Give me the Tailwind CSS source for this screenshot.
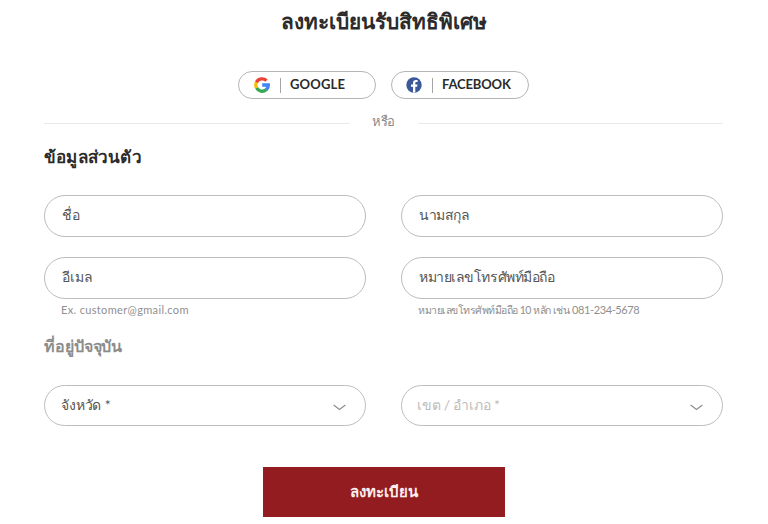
<!DOCTYPE html>
<html lang="th">
<head>
  <meta charset="UTF-8">
  <meta name="viewport" content="width=device-width, initial-scale=1.0">
  <title>ลงทะเบียนรับสิทธิพิเศษ</title>
  <script src="https://cdn.jsdelivr.net/npm/@tailwindcss/browser@4"></script>
</head>
<body class="bg-white text-[#2b2b2b] font-[Lato,sans-serif] pl-11 pr-[45px] overflow-hidden">
  <h1 class="h-[71px] text-center text-[20.8px] leading-[41px] font-bold whitespace-nowrap">ลงทะเบียนรับสิทธิพิเศษ</h1>

  <!-- Social login -->
  <div class="flex justify-center gap-[15px]">
    <button type="button" class="w-[138px] h-7 flex items-center rounded-full border border-[#b5b5b5] pl-[15px]">
      <svg class="w-4 h-4" viewBox="0 0 16 16" fill="none" stroke-width="3.3">
        <path stroke="#4285F4" d="M8.2 8h6.1a6.2 6.2 0 0 1-2.4 4.9"/>
        <path stroke="#34A853" d="M12.1 12.7A6.2 6.2 0 0 1 2.5 10.8"/>
        <path stroke="#FBBC05" d="M2.6 11a6.2 6.2 0 0 1 0-6"/>
        <path stroke="#EA4335" d="M2.5 5.2a6.2 6.2 0 0 1 10-1.5"/>
      </svg>
      <span class="ml-[10px] w-px h-[15px] bg-[#a5a5a5]"></span>
      <span class="ml-[9px] text-[13px] tracking-[.15px] font-bold">GOOGLE</span>
    </button>
    <button type="button" class="w-[138px] h-7 flex items-center rounded-full border border-[#b5b5b5] pl-[14px]">
      <svg class="w-4 h-4" viewBox="0 0 16 16">
        <circle cx="8" cy="8" r="7.7" fill="#3b5998"/>
        <path fill="#fff" d="M7 15.6V9.7H5V7.5h2V6c0-2 1.1-3.1 3-3.1l1.6.1v1.9h-1c-1 0-1.3.5-1.3 1.2v1.4h2.2l-.4 2.2H9.3v5.9z"/>
      </svg>
      <span class="ml-[10px] w-px h-[15px] bg-[#a5a5a5]"></span>
      <span class="ml-[9px] text-[13px] tracking-[-.15px] font-bold">FACEBOOK</span>
    </button>
  </div>

  <div class="mt-3 h-6 flex items-center">
    <span class="flex-1 h-px bg-[#e9e9e9]"></span>
    <span class="w-[68px] pb-1 text-center text-[13px] leading-5 tracking-[-.3px] text-[#8a8a8a]">หรือ</span>
    <span class="flex-1 h-px bg-[#e9e9e9]"></span>
  </div>

  <form>
    <h2 class="mt-[7px] h-[53px] text-[17px] leading-[30px] tracking-[.2px] font-bold">ข้อมูลส่วนตัว</h2>
    <div class="grid grid-cols-2 gap-x-[35px]">
      <div class="h-[62px]">
        <div class="h-[42px] flex items-center rounded-full border border-[#bdbdbd] px-[17px] pb-[3px] text-[14px] tracking-[-.4px] text-[#555]">ชื่อ</div>
      </div>
      <div class="h-[62px]">
        <div class="h-[42px] flex items-center rounded-full border border-[#bdbdbd] px-[17px] pb-[3px] text-[14px] tracking-[-.4px] text-[#555]">นามสกุล</div>
      </div>
      <div>
        <div class="h-[42px] flex items-center rounded-full border border-[#bdbdbd] px-[17px] pb-[3px] text-[14px] text-[#555]">อีเมล</div>
        <p class="pl-[17px] text-[11px] leading-[22px] tracking-[.35px] text-[#8f8f8f]">Ex. customer@gmail.com</p>
      </div>
      <div>
        <div class="h-[42px] flex items-center rounded-full border border-[#bdbdbd] px-[17px] pb-[3px] text-[14px] tracking-[-.45px] text-[#555]">หมายเลขโทรศัพท์มือถือ</div>
        <p class="pl-[17px] text-[11px] leading-[22px] text-[#8f8f8f] whitespace-nowrap"><span class="text-[10.5px] tracking-[-.5px]">หมายเลขโทรศัพท์มือถือ 10 หลัก เช่น</span> <span class="tracking-[-.4px]">081-234-5678</span></p>
      </div>
    </div>

    <h3 class="mt-[9px] h-[55px] text-[16px] leading-[31px] tracking-[-.1px] font-bold text-[#8c8c8c]">ที่อยู่ปัจจุบัน</h3>
    <div class="grid grid-cols-2 gap-x-[35px]">
      <div class="h-[41px] flex items-center justify-between rounded-full border border-[#bdbdbd] pl-4 pr-[19px] text-[14px] tracking-[-.15px] text-[#555]">
        <span class="pb-0.5">จังหวัด *</span>
        <svg class="w-[13px] h-[7px] mt-1" viewBox="0 0 13 7" fill="none" stroke="#8f8f8f" stroke-width="1.3"><path d="M.6 1l5.9 4.4L12.4 1"/></svg>
      </div>
      <div class="h-[41px] flex items-center justify-between rounded-full border border-[#bdbdbd] pl-[15px] pr-[19px] text-[14px] tracking-[-.2px] text-[#bcbcbc]">
        <span class="pb-0.5">เขต / อำเภอ *</span>
        <svg class="w-[13px] h-[7px] mt-1" viewBox="0 0 13 7" fill="none" stroke="#8f8f8f" stroke-width="1.3"><path d="M.6 1l5.9 4.4L12.4 1"/></svg>
      </div>
    </div>

    <button type="submit" class="mt-[41px] mx-auto block w-[242px] h-[50px] pb-0.5 bg-[#921c1f] text-[15px] font-bold text-[#fbeeee]">ลงทะเบียน</button>
  </form>
</body>
</html>
